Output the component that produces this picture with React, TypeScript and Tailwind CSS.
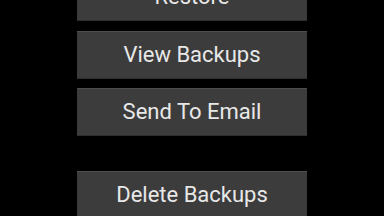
export default function App() {
  const btn =
    "w-[230px] h-[48px] flex items-center justify-center bg-[#3c3c3c] border-t border-t-[#4d4d4d] border-b border-b-[#2e2e2e] text-[#e8e8e8] text-[22px] leading-none";
  return (
    <div
      className="w-[384px] h-[216px] overflow-hidden bg-black"
      style={{ fontFamily: "Roboto, 'Noto Sans', sans-serif" }}
    >
      <div className="flex flex-col items-center -mt-[27px]">
        <div className={btn}>Restore</div>
        <div className={`${btn} mt-[10px]`}>View Backups</div>
        <div className={`${btn} mt-[9px]`}>Send To Email</div>
        <div className={`${btn} mt-[35px]`}>Delete Backups</div>
      </div>
    </div>
  );
}
